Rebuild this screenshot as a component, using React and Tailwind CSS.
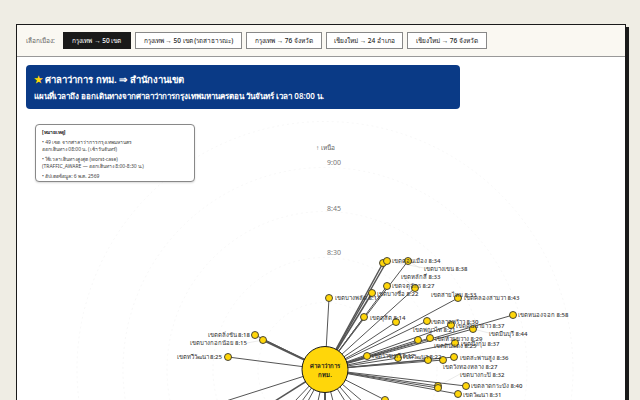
const tabs = [
  { label: "กรุงเทพ → 50 เขต", width: "w-[68px]", active: true },
  { label: "กรุงเทพ → 50 เขต (รถสาธารณะ)", width: "w-[107px]" },
  { label: "กรุงเทพ → 76 จังหวัด", width: "w-[76px]" },
  { label: "เชียงใหม่ → 24 อำเภอ", width: "w-[77px]" },
  { label: "เชียงใหม่ → 76 จังหวัด", width: "w-[80px]" },
]

const center = [325, 369.5]

// x, y, width of the line
const nodes = [
  [255, 335, 1], [263, 340, 2], [228, 357, 1], [329, 298, 1],
  [383, 263, 1.5], [387, 261, 1.5], [408, 261, 1], [387, 286, 1],
  [415, 288, 1], [372, 293, 1.5], [364, 317, 1], [396, 322, 1],
  [427, 321, 1], [451, 325, 1], [473, 329, 1],
  [418, 340, 1], [430, 338, 1], [367, 356, 1], [398, 358, 1],
  [428, 360, 1], [443, 360, 1], [438, 386, 1], [438, 388, 1],
  [385, 400, 1], [458, 298, 1], [513, 315, 1], [455, 343, 1],
  [454, 357, 1], [466, 386, 1], [458, 394, 1],
]

// lines that run off the bottom of the window
const offLines = [
  [226, 401, 1], [275, 401, 1.5], [295, 401, 1], [302, 401, 1], [308, 401, 1], [318, 401, 1],
  [325, 401, 2], [333, 401, 1], [345, 401, 1], [352, 401, 1], [362, 401, 1],
]

// faint lines from a node to a label that sits away from it
const leaders = [
  [263, 340, 247, 343], [387, 261, 424, 268], [408, 261, 420, 268], [415, 288, 401, 276],
  [473, 329, 489, 333], [443, 360, 443, 366], [438, 386, 460, 374],
]

const labels = [
  ["เขตตลิ่งชัน 8:18", 250, 337, "end"],
  ["เขตบางกอกน้อย 8:15", 247, 345, "end"],
  ["เขตทวีวัฒนา 8:25", 222, 359, "end"],
  ["เขตบางพลัด 8:17", 335, 300],
  ["เขตดอนเมือง 8:34", 392, 263],
  ["เขตบางเขน 8:38", 424, 271],
  ["เขตหลักสี่ 8:33", 401, 279],
  ["เขตจตุจักร 8:27", 392, 288],
  ["เขตบางซื่อ 8:22", 377, 296],
  ["เขตสายไหม 8:33", 431, 297],
  ["เขตคลองสามวา 8:43", 464, 300],
  ["เขตดุสิต 8:14", 370, 320],
  ["เขตหนองจอก 8:58", 518, 317],
  ["เขตลาดพร้าว 8:30", 431, 324],
  ["เขตคันนายาว 8:37", 456, 328],
  ["เขตพญาไท 8:21", 413, 332],
  ["เขตมีนบุรี 8:44", 489, 336],
  ["เขตห้วยขวาง 8:29", 435, 341],
  ["เขตบึงกุ่ม 8:37", 461, 346],
  ["เขตดินแดง 8:25", 434, 348],
  ["เขตราชเทวี 8:12", 372, 358],
  ["เขตวัฒนา 8:22", 403, 359],
  ["เขตสะพานสูง 8:36", 460, 360],
  ["เขตวังทองหลาง 8:27", 443, 369],
  ["เขตบางกะปิ 8:32", 460, 377],
  ["เขตลาดกระบัง 8:40", 471, 388],
  ["เขตวัฒนา 8:31", 463, 397],
]

const rings = [67, 112, 158, 202, 248]

const RadialMap = () => (
  <svg width="596" height="291" viewBox="26 109 596 291" className="ml-[9px] block">
    {rings.map((r) => (
      <circle key={r} cx={center[0]} cy={center[1]} r={r} fill="none" stroke="#f3f3f3" strokeWidth="0.7" strokeDasharray="2 3" />
    ))}
    <text x="316" y="150" fontSize="6.5" fill="#666">↑ เหนือ</text>
    <text x="327" y="165" fontSize="7" fill="#777">9:00</text>
    <text x="327" y="211" fontSize="7" fill="#777">8:45</text>
    <text x="327" y="255" fontSize="7" fill="#777">8:30</text>
    {leaders.map(([x1, y1, x2, y2]) => (
      <line key={`${x1}-${x2}`} x1={x1} y1={y1} x2={x2} y2={y2} stroke="#ddd" strokeWidth="0.6" />
    ))}
    {offLines.map(([x, y, w]) => (
      <line key={`${x}-${y}`} x1={center[0]} y1={center[1]} x2={x} y2={y} stroke="#555" strokeWidth={w} />
    ))}
    {nodes.map(([x, y, w]) => (
      <line key={`${x}-${y}`} x1={center[0]} y1={center[1]} x2={x} y2={y} stroke="#555" strokeWidth={w} />
    ))}
    {nodes.map(([x, y]) => (
      <circle key={`${x}-${y}`} cx={x} cy={y} r="3.5" fill="#ffd60a" stroke="#333" strokeWidth="0.9" />
    ))}
    <circle cx={center[0]} cy={center[1]} r="23" fill="#ffd60a" stroke="#1a1a1a" strokeWidth="1" />
    <text x={center[0]} y="368" fontSize="6" fontWeight="700" textAnchor="middle" fill="#1a1a1a">ศาลาว่าการ</text>
    <text x={center[0]} y="377" fontSize="6" fontWeight="700" textAnchor="middle" fill="#1a1a1a">กทม.</text>
    {labels.map(([text, x, y, anchor]) => (
      <text key={`${text}-${x}`} x={x} y={y} fontSize="6" fontWeight="500" textAnchor={anchor || "start"} fill="#333">
        {text}
      </text>
    ))}
  </svg>
)

const App = () => {
  return (
    <div className="h-[400px] overflow-hidden bg-[#efede4] pt-6 pr-[14px] pl-4 font-['Noto_Sans',sans-serif]">
      <div className="h-[400px] border border-[#1a1a1a] bg-white shadow-[3px_3px_0_#1a1a1a]">
        <div className="flex h-8 items-center gap-1 border-b border-[#999] bg-[#faf8f2] px-[9px]">
          <span className="w-[33px] text-[6.5px] whitespace-nowrap text-[#666]">เลือกเมือง:</span>
          {tabs.map((tab) => (
            <button
              key={tab.label}
              className={
                tab.active
                  ? `h-[17px] ${tab.width} border border-[#1a1a1a] bg-[#1a1a1a] text-[6.5px] font-medium whitespace-nowrap text-white`
                  : `h-[17px] ${tab.width} border border-[#888] bg-white text-[6.5px] font-medium whitespace-nowrap text-[#1a1a1a]`
              }
            >
              {tab.label}
            </button>
          ))}
        </div>

        <div className="relative pt-2">
          <div className="mx-[9px] h-11 w-[434px] rounded bg-[#0a3a86] px-2 pt-[7px] text-white">
            <div className="text-[9.5px] leading-[15px] font-bold">
              <span className="text-[#ffd60a]">★</span> ศาลาว่าการ กทม. ⇒ สำนักงานเขต
            </div>
            <div className="mt-[3px] text-[8px] leading-3 font-semibold">
              แผนที่เวลาถึง ออกเดินทางจากศาลาว่าการกรุงเทพมหานครตอน วันจันทร์ เวลา 08:00 น.
            </div>
          </div>

          <div className="absolute top-[67px] left-[18px] h-[58px] w-[160px] rounded-sm border border-[#888] bg-white px-1.5 pt-1 text-[5px] leading-[7.5px] text-[#444] shadow-[0_1px_2px_rgba(0,0,0,0.15)]">
            <div className="mb-[2px] font-bold text-[#222]">[หมายเหตุ]</div>
            <div>• 49 เขต จากศาลาว่าการกรุงเทพมหานคร</div>
            <div className="mb-[2px]">ออกเดินทาง 08:00 น. (เช้าวันจันทร์)</div>
            <div>• ใช้เวลาเดินทางสูงสุด (worst-case)</div>
            <div className="mb-[2px]">(TRAFFIC_AWARE — ออกเดินทาง 8:00-8:30 น.)</div>
            <div>• อัปเดตข้อมูล: 6 พ.ค. 2569</div>
          </div>

          <RadialMap />
        </div>
      </div>
    </div>
  )
}

export default App
